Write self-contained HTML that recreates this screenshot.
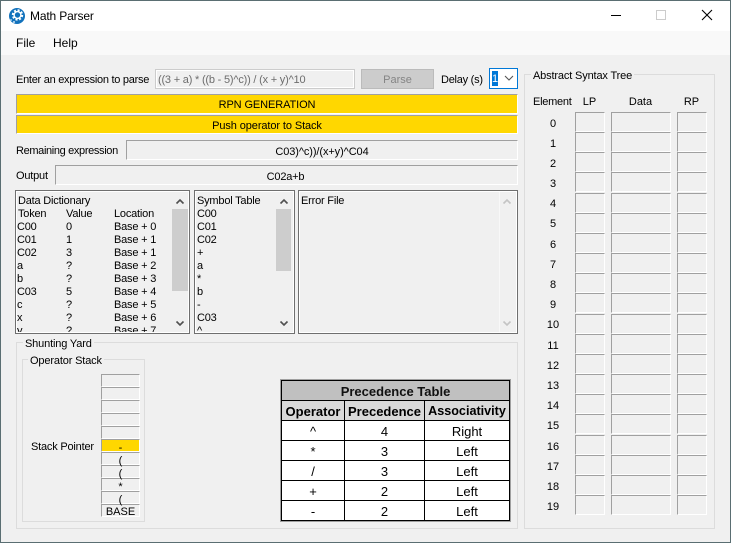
<!DOCTYPE html>
<html><head><meta charset="utf-8"><style>
html,body{margin:0;padding:0;width:731px;height:543px;overflow:hidden;background:#f0f0f0}
body{position:relative;font:11px "Liberation Sans",sans-serif;color:#000}
div,span.a{position:absolute;box-sizing:border-box}
.t{position:absolute;white-space:nowrap;line-height:13px;height:13px;letter-spacing:-.2px;margin-top:1px}
.c{text-align:center;letter-spacing:0}
.s{border-top:1px solid #a0a0a0;border-left:1px solid #a0a0a0;border-right:1px solid #fff;border-bottom:1px solid #fff;background:#f0f0f0}
.sg{border-top:1px solid #a0a0a0;border-left:1px solid #a0a0a0;border-right:1px solid #fff;border-bottom:1px solid #fff;background:#ffd700;text-align:center;line-height:20px;letter-spacing:-.1px}
.g{border:1px solid #dcdcdc}
.l{background:#f0f0f0;padding:0 2px;white-space:nowrap;line-height:13px;height:13px;letter-spacing:-.15px}
.lb{border:1px solid #6f6f6f;outline:1px solid #fff;outline-offset:-2px;overflow:hidden}
.n{left:533px;width:40px;text-align:center;letter-spacing:0}
.h{position:absolute;font-size:13px;line-height:19px;height:19px;text-align:center;white-space:nowrap;margin-top:1px}
.b{font-weight:bold;font-size:13px;letter-spacing:0}
.tl{position:absolute;background:#000}
</style></head><body>
<div style="left:0;top:0;width:731px;height:31px;background:#fff"></div>
<div style="left:0;top:31px;width:731px;height:24px;background:#f9f9f9"></div>
<div style="left:0;top:0;width:731px;height:1px;background:#5a6e72"></div>
<div style="left:0;top:0;width:1px;height:543px;background:#5a6e72"></div>
<div style="left:730px;top:0;width:1px;height:543px;background:#5a6e72"></div>
<div style="left:0;top:542px;width:731px;height:1px;background:#5a6e72"></div>
<svg style="position:absolute;left:8px;top:7px" width="18" height="18" viewBox="0 0 18 18"><circle cx="9" cy="9" r="8" fill="#1272bc"/><circle cx="9.5" cy="8" r="4.6" fill="none" stroke="#fff" stroke-width="2.2" stroke-dasharray="2 1.6"/><circle cx="9.5" cy="8" r="3.4" fill="none" stroke="#fff" stroke-width="1.4"/><circle cx="3" cy="13" r="1" fill="#9fd0f0"/><circle cx="6" cy="15" r="1" fill="#cfe6f6"/></svg>
<span class="t" style="left:30px;top:8px;font-size:12px;line-height:14px;height:14px;letter-spacing:-.15px">Math Parser</span>
<div style="left:611px;top:15px;width:10px;height:1px;background:#000"></div>
<div style="left:656px;top:10px;width:10px;height:10px;border:1px solid #ccc"></div>
<svg style="position:absolute;left:701px;top:9px" width="12" height="12" viewBox="0 0 12 12"><path d="M1 1L11 11M11 1L1 11" stroke="#000" stroke-width="1.1" fill="none"/></svg>
<span class="t" style="left:16px;top:36px;font-size:12px;letter-spacing:0">File</span>
<span class="t" style="left:53px;top:36px;font-size:12px;letter-spacing:0">Help</span>

<span class="t" style="left:16px;top:73px;letter-spacing:-.27px">Enter an expression to parse</span>
<div style="left:155px;top:69px;width:200px;height:20px;border:1px solid #ccc;outline:1px solid #fff;outline-offset:-2px;background:#f0f0f0"></div>
<span class="t" style="left:158px;top:73px;color:#6d6d6d">((3 + a) * ((b - 5)^c)) / (x + y)^10</span>
<div style="left:361px;top:69px;width:73px;height:20px;background:#ccc;border:1px solid #bbb"></div>
<span class="t c" style="left:361px;top:73px;width:73px;color:#858585">Parse</span>
<span class="t" style="left:441px;top:73px;letter-spacing:-.25px">Delay (s)</span>
<div style="left:489px;top:68px;width:29px;height:21px;border:1px solid #0078d7;background:#fff"></div>
<div style="left:492px;top:71px;width:6px;height:15px;background:#0078d7"></div>
<span class="t" style="left:492px;top:72px;color:#fff;letter-spacing:0">1</span>
<svg style="position:absolute;left:504px;top:75px" width="10" height="7" viewBox="0 0 10 7"><path d="M1 1L5 5L9 1" stroke="#555" stroke-width="1.1" fill="none"/></svg>

<div class="sg" style="left:16px;top:94px;width:502px;height:20px">RPN GENERATION</div>
<div class="sg" style="left:16px;top:115px;width:502px;height:19px;line-height:21px">Push operator to Stack</div>
<span class="t" style="left:16px;top:144px;letter-spacing:-.35px">Remaining expression</span>
<div class="s" style="left:126px;top:140px;width:392px;height:20px"></div>
<span class="t c" style="left:126px;top:145px;width:392px;letter-spacing:-.1px">C03)^c))/(x+y)^C04</span>
<span class="t" style="left:16px;top:169px">Output</span>
<div class="s" style="left:55px;top:165px;width:463px;height:20px"></div>
<span class="t c" style="left:55px;top:170px;width:461px;letter-spacing:-.2px">C02a+b</span>

<!-- Data dictionary -->
<div class="lb" style="left:15px;top:190px;width:175px;height:144px"></div>
<div style="left:17px;top:192px;width:171px;height:140px;overflow:hidden">
<span class="t" style="left:1px;top:2px">Data Dictionary</span>
<span class="t" style="left:1px;top:15px">Token</span><span class="t" style="left:49px;top:15px">Value</span><span class="t" style="left:97px;top:15px">Location</span>
<span class="t" style="left:0;top:28px">C00</span><span class="t" style="left:49px;top:28px">0</span><span class="t" style="left:97px;top:28px">Base + 0</span>
<span class="t" style="left:0;top:41px">C01</span><span class="t" style="left:49px;top:41px">1</span><span class="t" style="left:97px;top:41px">Base + 1</span>
<span class="t" style="left:0;top:54px">C02</span><span class="t" style="left:49px;top:54px">3</span><span class="t" style="left:97px;top:54px">Base + 1</span>
<span class="t" style="left:0;top:67px">a</span><span class="t" style="left:49px;top:67px">?</span><span class="t" style="left:97px;top:67px">Base + 2</span>
<span class="t" style="left:0;top:80px">b</span><span class="t" style="left:49px;top:80px">?</span><span class="t" style="left:97px;top:80px">Base + 3</span>
<span class="t" style="left:0;top:93px">C03</span><span class="t" style="left:49px;top:93px">5</span><span class="t" style="left:97px;top:93px">Base + 4</span>
<span class="t" style="left:0;top:106px">c</span><span class="t" style="left:49px;top:106px">?</span><span class="t" style="left:97px;top:106px">Base + 5</span>
<span class="t" style="left:0;top:119px">x</span><span class="t" style="left:49px;top:119px">?</span><span class="t" style="left:97px;top:119px">Base + 6</span>
<span class="t" style="left:0;top:132px">y</span><span class="t" style="left:49px;top:132px">?</span><span class="t" style="left:97px;top:132px">Base + 7</span>
</div>
<div style="left:172px;top:192px;width:16px;height:140px;background:#f0f0f0"></div>
<div style="left:172px;top:209px;width:16px;height:82px;background:#cdcdcd"></div>
<svg style="position:absolute;left:175px;top:198px" width="10" height="7" viewBox="0 0 10 7"><path d="M1.5 5.5L5 2L8.5 5.5" stroke="#505050" stroke-width="1.6" fill="none"/></svg>
<svg style="position:absolute;left:175px;top:320px" width="10" height="7" viewBox="0 0 10 7"><path d="M1.5 1.5L5 5L8.5 1.5" stroke="#505050" stroke-width="1.6" fill="none"/></svg>

<!-- Symbol table -->
<div class="lb" style="left:194px;top:190px;width:101px;height:144px"></div>
<div style="left:196px;top:192px;width:80px;height:140px;overflow:hidden">
<span class="t" style="left:1px;top:2px">Symbol Table</span>
<span class="t" style="left:1px;top:15px">C00</span>
<span class="t" style="left:1px;top:28px">C01</span>
<span class="t" style="left:1px;top:41px">C02</span>
<span class="t" style="left:1px;top:54px">+</span>
<span class="t" style="left:1px;top:67px">a</span>
<span class="t" style="left:1px;top:80px">*</span>
<span class="t" style="left:1px;top:93px">b</span>
<span class="t" style="left:1px;top:106px">-</span>
<span class="t" style="left:1px;top:119px">C03</span>
<span class="t" style="left:1px;top:132px">^</span>
</div>
<div style="left:276px;top:209px;width:15px;height:62px;background:#cdcdcd"></div>
<svg style="position:absolute;left:279px;top:198px" width="10" height="7" viewBox="0 0 10 7"><path d="M1.5 5.5L5 2L8.5 5.5" stroke="#505050" stroke-width="1.6" fill="none"/></svg>
<svg style="position:absolute;left:279px;top:320px" width="10" height="7" viewBox="0 0 10 7"><path d="M1.5 1.5L5 5L8.5 1.5" stroke="#505050" stroke-width="1.6" fill="none"/></svg>

<!-- Error -->
<div class="lb" style="left:298px;top:190px;width:220px;height:144px"></div>
<div style="left:499px;top:192px;width:1px;height:140px;background:#f8f8f8"></div>
<span class="t" style="left:301px;top:194px">Error File</span>
<svg style="position:absolute;left:502px;top:198px" width="10" height="7" viewBox="0 0 10 7"><path d="M1.5 5.5L5 2L8.5 5.5" stroke="#c4c4c4" stroke-width="1.6" fill="none"/></svg>
<svg style="position:absolute;left:502px;top:320px" width="10" height="7" viewBox="0 0 10 7"><path d="M1.5 1.5L5 5L8.5 1.5" stroke="#c4c4c4" stroke-width="1.6" fill="none"/></svg>

<!-- Shunting yard -->
<div class="g" style="left:16px;top:342px;width:502px;height:187px"></div>
<span class="t l" style="left:23px;top:337px">Shunting Yard</span>
<div class="g" style="left:22px;top:359px;width:123px;height:163px"></div>
<span class="t l" style="left:28px;top:354px">Operator Stack</span>
<span class="t" style="left:31px;top:440px">Stack Pointer</span>
<div class="s" style="left:101px;top:374px;width:39px;height:13px"></div>
<div class="s" style="left:101px;top:387px;width:39px;height:13px"></div>
<div class="s" style="left:101px;top:400px;width:39px;height:13px"></div>
<div class="s" style="left:101px;top:413px;width:39px;height:13px"></div>
<div class="s" style="left:101px;top:426px;width:39px;height:13px"></div>
<div class="s" style="left:101px;top:439px;width:39px;height:13px;background:#ffd700"></div>
<div class="s" style="left:101px;top:452px;width:39px;height:13px"></div>
<div class="s" style="left:101px;top:465px;width:39px;height:13px"></div>
<div class="s" style="left:101px;top:478px;width:39px;height:13px"></div>
<div class="s" style="left:101px;top:491px;width:39px;height:13px"></div>
<div class="s" style="left:101px;top:504px;width:39px;height:13px"></div>
<span class="t c" style="left:101px;top:441px;width:39px">-</span>
<span class="t c" style="left:101px;top:454px;width:39px">(</span>
<span class="t c" style="left:101px;top:467px;width:39px">(</span>
<span class="t c" style="left:101px;top:480px;width:39px">*</span>
<span class="t c" style="left:101px;top:493px;width:39px">(</span>
<span class="t c" style="left:101px;top:505px;width:39px">BASE</span>

<!-- Precedence table -->
<div style="left:280px;top:379px;width:231px;height:143px;background:#a0a0a0"></div>
<div style="left:281px;top:380px;width:229px;height:141px;background:#fff"></div>
<div style="left:282px;top:381px;width:227px;height:19px;background:#c0c0c0"></div>
<div style="left:282px;top:401px;width:227px;height:19px;background:#d9d9d9"></div>
<div class="tl" style="left:281px;top:380px;width:229px;height:1px"></div>
<div class="tl" style="left:281px;top:400px;width:229px;height:1px"></div>
<div class="tl" style="left:281px;top:420px;width:229px;height:1px"></div>
<div class="tl" style="left:281px;top:440px;width:229px;height:1px"></div>
<div class="tl" style="left:281px;top:460px;width:229px;height:1px"></div>
<div class="tl" style="left:281px;top:480px;width:229px;height:1px"></div>
<div class="tl" style="left:281px;top:500px;width:229px;height:1px"></div>
<div class="tl" style="left:281px;top:520px;width:229px;height:1px"></div>
<div class="tl" style="left:281px;top:380px;width:1px;height:141px"></div>
<div class="tl" style="left:509px;top:380px;width:1px;height:141px"></div>
<div class="tl" style="left:344px;top:400px;width:1px;height:121px"></div>
<div class="tl" style="left:424px;top:400px;width:1px;height:121px"></div>
<span class="h b" style="left:282px;top:381px;width:227px;color:#111">Precedence Table</span>
<span class="h b" style="left:282px;top:401px;width:62px">Operator</span>
<span class="h b" style="left:345px;top:401px;width:79px">Precedence</span>
<span class="h b" style="left:425px;top:401px;width:84px;font-size:12.6px">Associativity</span>
<span class="h" style="left:282px;top:421px;width:62px">^</span><span class="h" style="left:345px;top:421px;width:79px">4</span><span class="h" style="left:425px;top:421px;width:84px">Right</span>
<span class="h" style="left:282px;top:441px;width:62px">*</span><span class="h" style="left:345px;top:441px;width:79px">3</span><span class="h" style="left:425px;top:441px;width:84px">Left</span>
<span class="h" style="left:282px;top:461px;width:62px">/</span><span class="h" style="left:345px;top:461px;width:79px">3</span><span class="h" style="left:425px;top:461px;width:84px">Left</span>
<span class="h" style="left:282px;top:481px;width:62px">+</span><span class="h" style="left:345px;top:481px;width:79px">2</span><span class="h" style="left:425px;top:481px;width:84px">Left</span>
<span class="h" style="left:282px;top:501px;width:62px">-</span><span class="h" style="left:345px;top:501px;width:79px">2</span><span class="h" style="left:425px;top:501px;width:84px">Left</span>

<!-- AST -->
<div class="g" style="left:524px;top:74px;width:191px;height:455px"></div>
<span class="t l" style="left:531px;top:69px">Abstract Syntax Tree</span>
<span class="t" style="left:533px;top:95px;letter-spacing:-.25px">Element</span>
<span class="t c" style="left:575px;top:95px;width:29px">LP</span>
<span class="t c" style="left:611px;top:95px;width:59px">Data</span>
<span class="t c" style="left:677px;top:95px;width:29px">RP</span>

<span class="t n" style="top:117px">0</span><div class="s" style="left:575px;top:112px;width:30px;height:20px"></div><div class="s" style="left:611px;top:112px;width:60px;height:20px"></div><div class="s" style="left:677px;top:112px;width:30px;height:20px"></div>
<span class="t n" style="top:137px">1</span><div class="s" style="left:575px;top:132px;width:30px;height:20px"></div><div class="s" style="left:611px;top:132px;width:60px;height:20px"></div><div class="s" style="left:677px;top:132px;width:30px;height:20px"></div>
<span class="t n" style="top:157px">2</span><div class="s" style="left:575px;top:152px;width:30px;height:20px"></div><div class="s" style="left:611px;top:152px;width:60px;height:20px"></div><div class="s" style="left:677px;top:152px;width:30px;height:20px"></div>
<span class="t n" style="top:177px">3</span><div class="s" style="left:575px;top:172px;width:30px;height:20px"></div><div class="s" style="left:611px;top:172px;width:60px;height:20px"></div><div class="s" style="left:677px;top:172px;width:30px;height:20px"></div>
<span class="t n" style="top:197px">4</span><div class="s" style="left:575px;top:193px;width:30px;height:20px"></div><div class="s" style="left:611px;top:193px;width:60px;height:20px"></div><div class="s" style="left:677px;top:193px;width:30px;height:20px"></div>
<span class="t n" style="top:217px">5</span><div class="s" style="left:575px;top:213px;width:30px;height:20px"></div><div class="s" style="left:611px;top:213px;width:60px;height:20px"></div><div class="s" style="left:677px;top:213px;width:30px;height:20px"></div>
<span class="t n" style="top:238px">6</span><div class="s" style="left:575px;top:233px;width:30px;height:20px"></div><div class="s" style="left:611px;top:233px;width:60px;height:20px"></div><div class="s" style="left:677px;top:233px;width:30px;height:20px"></div>
<span class="t n" style="top:258px">7</span><div class="s" style="left:575px;top:253px;width:30px;height:20px"></div><div class="s" style="left:611px;top:253px;width:60px;height:20px"></div><div class="s" style="left:677px;top:253px;width:30px;height:20px"></div>
<span class="t n" style="top:278px">8</span><div class="s" style="left:575px;top:273px;width:30px;height:20px"></div><div class="s" style="left:611px;top:273px;width:60px;height:20px"></div><div class="s" style="left:677px;top:273px;width:30px;height:20px"></div>
<span class="t n" style="top:298px">9</span><div class="s" style="left:575px;top:293px;width:30px;height:20px"></div><div class="s" style="left:611px;top:293px;width:60px;height:20px"></div><div class="s" style="left:677px;top:293px;width:30px;height:20px"></div>
<span class="t n" style="top:318px">10</span><div class="s" style="left:575px;top:314px;width:30px;height:20px"></div><div class="s" style="left:611px;top:314px;width:60px;height:20px"></div><div class="s" style="left:677px;top:314px;width:30px;height:20px"></div>
<span class="t n" style="top:339px">11</span><div class="s" style="left:575px;top:334px;width:30px;height:20px"></div><div class="s" style="left:611px;top:334px;width:60px;height:20px"></div><div class="s" style="left:677px;top:334px;width:30px;height:20px"></div>
<span class="t n" style="top:359px">12</span><div class="s" style="left:575px;top:354px;width:30px;height:20px"></div><div class="s" style="left:611px;top:354px;width:60px;height:20px"></div><div class="s" style="left:677px;top:354px;width:30px;height:20px"></div>
<span class="t n" style="top:379px">13</span><div class="s" style="left:575px;top:374px;width:30px;height:20px"></div><div class="s" style="left:611px;top:374px;width:60px;height:20px"></div><div class="s" style="left:677px;top:374px;width:30px;height:20px"></div>
<span class="t n" style="top:399px">14</span><div class="s" style="left:575px;top:394px;width:30px;height:20px"></div><div class="s" style="left:611px;top:394px;width:60px;height:20px"></div><div class="s" style="left:677px;top:394px;width:30px;height:20px"></div>
<span class="t n" style="top:419px">15</span><div class="s" style="left:575px;top:414px;width:30px;height:20px"></div><div class="s" style="left:611px;top:414px;width:60px;height:20px"></div><div class="s" style="left:677px;top:414px;width:30px;height:20px"></div>
<span class="t n" style="top:440px">16</span><div class="s" style="left:575px;top:435px;width:30px;height:20px"></div><div class="s" style="left:611px;top:435px;width:60px;height:20px"></div><div class="s" style="left:677px;top:435px;width:30px;height:20px"></div>
<span class="t n" style="top:460px">17</span><div class="s" style="left:575px;top:455px;width:30px;height:20px"></div><div class="s" style="left:611px;top:455px;width:60px;height:20px"></div><div class="s" style="left:677px;top:455px;width:30px;height:20px"></div>
<span class="t n" style="top:480px">18</span><div class="s" style="left:575px;top:475px;width:30px;height:20px"></div><div class="s" style="left:611px;top:475px;width:60px;height:20px"></div><div class="s" style="left:677px;top:475px;width:30px;height:20px"></div>
<span class="t n" style="top:500px">19</span><div class="s" style="left:575px;top:495px;width:30px;height:20px"></div><div class="s" style="left:611px;top:495px;width:60px;height:20px"></div><div class="s" style="left:677px;top:495px;width:30px;height:20px"></div>
</body></html>
